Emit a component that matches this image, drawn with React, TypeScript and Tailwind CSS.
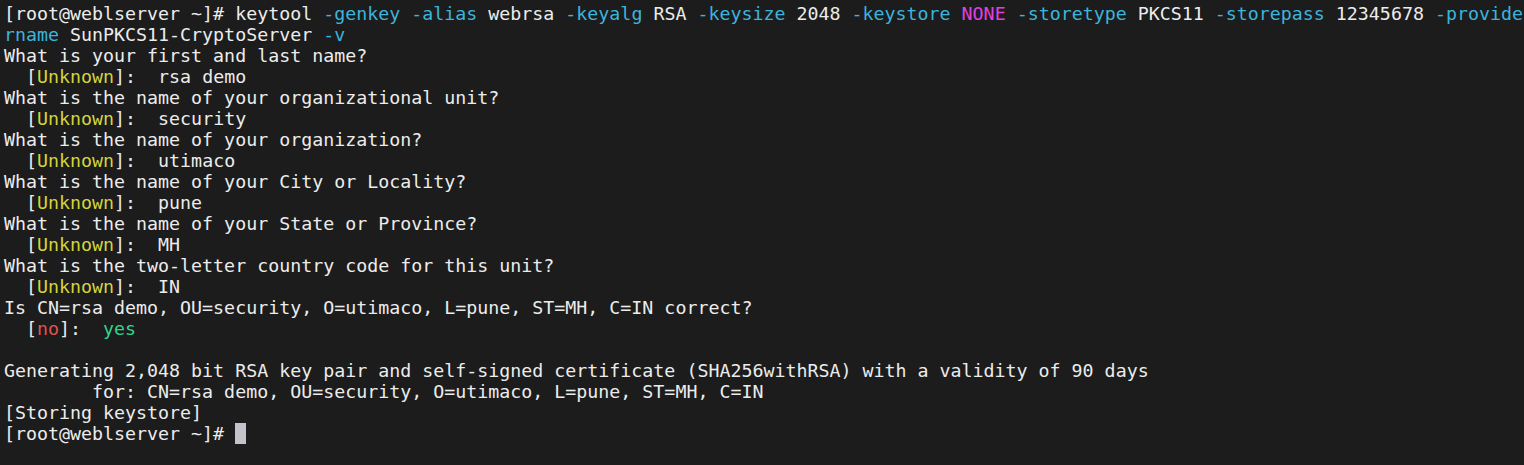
type Seg = [string, string?];

const W = "text-[#ececec]";
const C = "text-[#3db4dc]";
const M = "text-[#e040e0]";
const Y = "text-[#d4d43a]";
const R = "text-[#e05252]";
const G = "text-[#2dd68f]";

function unknown(answer: string): Seg[] {
  return [["  ["], ["Unknown", Y], ["]:  " + answer]];
}

const lines: Seg[][] = [
  [
    ["[root@weblserver ~]# keytool "],
    ["-genkey -alias", C],
    [" webrsa "],
    ["-keyalg", C],
    [" RSA "],
    ["-keysize", C],
    [" 2048 "],
    ["-keystore", C],
    [" "],
    ["NONE", M],
    [" "],
    ["-storetype", C],
    [" PKCS11 "],
    ["-storepass", C],
    [" 12345678 "],
    ["-provide", C],
  ],
  [["rname", C], [" SunPKCS11-CryptoServer "], ["-v", C]],
  [["What is your first and last name?"]],
  unknown("rsa demo"),
  [["What is the name of your organizational unit?"]],
  unknown("security"),
  [["What is the name of your organization?"]],
  unknown("utimaco"),
  [["What is the name of your City or Locality?"]],
  unknown("pune"),
  [["What is the name of your State or Province?"]],
  unknown("MH"),
  [["What is the two-letter country code for this unit?"]],
  unknown("IN"),
  [["Is CN=rsa demo, OU=security, O=utimaco, L=pune, ST=MH, C=IN correct?"]],
  [["  ["], ["no", R], ["]:  "], ["yes", G]],
  [[" "]],
  [["Generating 2,048 bit RSA key pair and self-signed certificate (SHA256withRSA) with a validity of 90 days"]],
  [["        for: CN=rsa demo, OU=security, O=utimaco, L=pune, ST=MH, C=IN"]],
  [["[Storing keystore]"]],
];

export default function App() {
  return (
    <div className="h-[465px] w-[1524px] overflow-hidden bg-[#1c1c1c] pl-[4px] pt-[3px] font-['DejaVu_Sans_Mono',monospace] text-[18.3px] leading-[21px]">
      {lines.map((line, i) => (
        <div key={i} className="h-[21px] whitespace-pre">
          {line.map(([text, cls], j) => (
            <span key={j} className={cls ?? W}>
              {text}
            </span>
          ))}
        </div>
      ))}
      <div className="flex h-[21px] items-center whitespace-pre">
        <span className={W}>[root@weblserver ~]# </span>
        <span className="h-[21px] w-[11px] bg-[#c3c3cc]" />
      </div>
    </div>
  );
}
